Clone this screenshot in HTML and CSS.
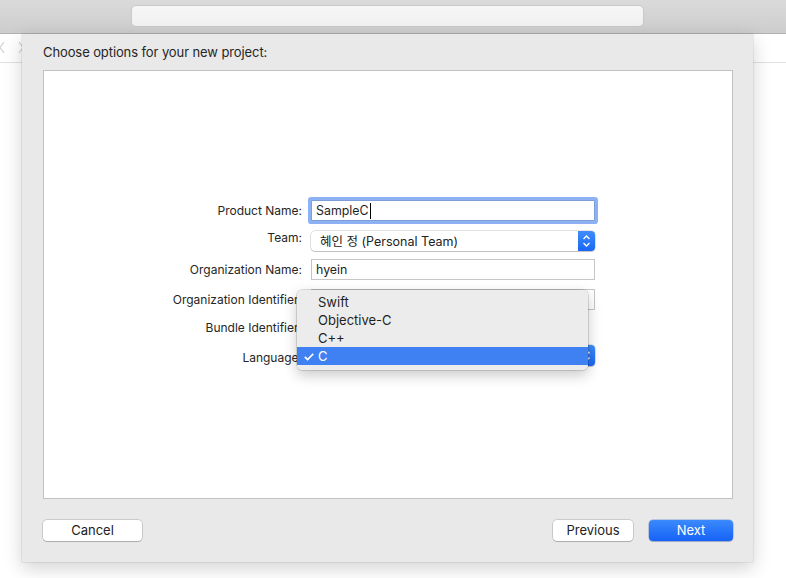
FILE: index.html
```html
<!DOCTYPE html>
<html>
<head>
<meta charset="utf-8">
<link rel="stylesheet" href="styles.css">
</head>
<body>
<div class="toolbar"><div class="search"></div></div>
<div class="content">
  <svg class="nav" width="30" height="20" viewBox="0 0 30 20"><polyline points="4,4 0,9.5 4,15" fill="none" stroke="#cfcfcf" stroke-width="1.2"/><polyline points="19,4 23,9.5 19,15" fill="none" stroke="#cfcfcf" stroke-width="1.2"/></svg>
  <div class="sheet">
    <div class="title">Choose options for your new project:</div>
    <div class="box">
      <div class="form">
        <div class="row r1">
          <div class="label">Product Name:</div>
          <div class="field focused">SampleC<span class="caret"></span></div>
        </div>
        <div class="row r2">
          <div class="label up">Team:</div>
          <div class="popup">
            <span class="popup-text">혜인 정 (Personal Team)</span>
            <span class="stepper"><svg width="17" height="20" viewBox="0 0 17 20"><polyline points="5.5,8 8.5,5 11.5,8" fill="none" stroke="#fff" stroke-width="1.4"/><polyline points="5.5,12 8.5,15 11.5,12" fill="none" stroke="#fff" stroke-width="1.4"/></svg></span>
          </div>
        </div>
        <div class="row r3">
          <div class="label">Organization Name:</div>
          <div class="field">hyein</div>
        </div>
        <div class="row r4">
          <div class="label">Organization Identifier:</div>
          <div class="field"></div>
        </div>
        <div class="row r5">
          <div class="label flat">Bundle Identifier:</div>
          <div class="value"></div>
        </div>
        <div class="row r6">
          <div class="label down">Language:</div>
          <div class="popup anchor">
            <span class="popup-text"></span>
            <span class="stepper"><svg width="17" height="21" viewBox="0 0 17 21"><polyline points="5.5,8.5 8.5,5.5 11.5,8.5" fill="none" stroke="#fff" stroke-width="1.4"/><polyline points="5.5,12.5 8.5,15.5 11.5,12.5" fill="none" stroke="#fff" stroke-width="1.4"/></svg></span>
            <div class="menu">
              <div class="item">Swift</div>
              <div class="item">Objective-C</div>
              <div class="item">C++</div>
              <div class="item selected"><svg class="check" width="10" height="8" viewBox="0 0 10 8"><polyline points="0.8,3.8 3.6,6.6 9.2,0.8" fill="none" stroke="#fff" stroke-width="1.7"/></svg>C</div>
            </div>
          </div>
        </div>
      </div>
    </div>
    <div class="footer">
      <div class="btn cancel">Cancel</div>
      <div class="spacer"></div>
      <div class="btn previous">Previous</div>
      <div class="btn primary">Next</div>
    </div>
  </div>
</div>
</body>
</html>
```

FILE: styles.css
```css
html, body {
  margin: 0;
  padding: 0;
  width: 786px;
  height: 578px;
  overflow: hidden;
  background: #ffffff;
  font-family: "Inter", "Noto Sans CJK KR", sans-serif;
  font-size: 13px;
  line-height: 16px;
  color: #232323;
}

.toolbar {
  height: 33px;
  border-bottom: 1px solid #b3b3b3;
  background: linear-gradient(#dadada, #cdcdcd);
  padding-left: 131px;
  box-sizing: content-box;
  display: flex;
  align-items: flex-start;
}

.search {
  margin-top: 5px;
  width: 511px;
  height: 20px;
  background: linear-gradient(#f6f6f6, #f1f1f1);
  border: 1px solid #c9c9c9;
  border-radius: 5px;
}

.content {
  position: relative;
  height: 544px;
  background: linear-gradient(to bottom, #ffffff 0, #ffffff 28px, #e2e2e2 28px, #e2e2e2 29px, #ffffff 29px);
}

.nav {
  position: absolute;
  left: 0;
  top: 4px;
}

.sheet {
  position: relative;
  margin-left: 22px;
  width: 731px;
  height: 528px;
  box-sizing: border-box;
  padding: 10px 20px 0 21px;
  background: #e9e9e9;
  box-shadow: 0 6px 18px rgba(0, 0, 0, 0.18), 0 0 0 0.5px rgba(0, 0, 0, 0.12);
}

.title {
  height: 16px;
  color: #262626;
  letter-spacing: -0.1px;
}

.box {
  margin-top: 10px;
  height: 429px;
  box-sizing: border-box;
  background: #ffffff;
  border: 1px solid #c2c2c2;
}

.form {
  padding-top: 129px;
  display: flex;
  flex-direction: column;
}

.row {
  display: flex;
  align-items: flex-start;
}

.r2 { margin-top: 10px; }
.r3 { margin-top: 8px; }
.r4 { margin-top: 9px; }
.r5 { margin-top: 9px; }
.r6 { margin-top: 10px; }

.label {
  width: 258px;
  margin-right: 9px;
  text-align: right;
  padding-top: 3px;
  font-size: 12px;
  line-height: 15px;
  color: #262626;
  white-space: nowrap;
}

.label.up { padding-top: 0; margin-top: -1px; }
.label.flat { padding-top: 1px; }
.label.down { padding-top: 5px; }

.field {
  width: 284px;
  height: 21px;
  box-sizing: border-box;
  border: 1px solid #c6c6c6;
  padding: 2px 4px 0;
  background: #ffffff;
  color: #1e1e1e;
  font-size: 12.4px;
  display: flex;
  align-items: flex-start;
}

.field.focused {
  border-color: #7d9fd8;
  box-shadow: 0 0 0 3px #8cb1f4;
  border-radius: 1px;
}

.caret {
  display: inline-block;
  width: 1px;
  height: 16px;
  margin-left: 1px;
  background: #000;
}

.value {
  height: 16px;
}

.popup {
  position: relative;
  width: 284px;
  height: 20px;
  box-sizing: border-box;
  background: #ffffff;
  border-radius: 4px;
  box-shadow: 0 0 0 0.5px rgba(0, 0, 0, 0.22), 0 1px 1px rgba(0, 0, 0, 0.15);
  display: flex;
  align-items: flex-start;
}

.popup.anchor { height: 21px; }

.popup-text {
  flex: 1;
  padding: 3px 0 0 9px;
  font-size: 12.5px;
  color: #222;
}

.stepper {
  width: 17px;
  height: 100%;
  border-radius: 0 4px 4px 0;
  background: linear-gradient(#3f8dfb, #1b66f4);
  display: flex;
}

.menu {
  position: absolute;
  left: -14px;
  top: -55px;
  width: 291px;
  box-sizing: border-box;
  padding: 3px 0 5px;
  background: rgba(236, 236, 236, 0.98);
  border-radius: 5px;
  box-shadow: 0 0 0 0.5px rgba(0, 0, 0, 0.25), 0 5px 14px rgba(0, 0, 0, 0.22);
  z-index: 5;
}

.item {
  position: relative;
  height: 18px;
  line-height: 18px;
  padding-left: 21px;
  color: #1f1f1f;
}

.item.selected {
  background: #3f80f3;
  color: #ffffff;
}

.check {
  position: absolute;
  left: 7px;
  top: 6px;
}

.footer {
  margin-top: 21px;
  display: flex;
  align-items: flex-start;
}

.spacer { flex: 1; }

.btn {
  height: 21px;
  box-sizing: border-box;
  border-radius: 4px;
  background: #ffffff;
  box-shadow: 0 0 0 0.5px rgba(0, 0, 0, 0.25), 0 1px 1px rgba(0, 0, 0, 0.15);
  text-align: center;
  line-height: 21px;
  color: #222;
}

.cancel { width: 99px; }
.previous { width: 80px; }

.primary {
  width: 84px;
  margin-left: 16px;
  background: linear-gradient(#3b8afd, #1662f5);
  color: #ffffff;
  box-shadow: 0 0 0 0.5px rgba(0, 60, 200, 0.4), 0 1px 1px rgba(0, 0, 0, 0.15);
}
```
